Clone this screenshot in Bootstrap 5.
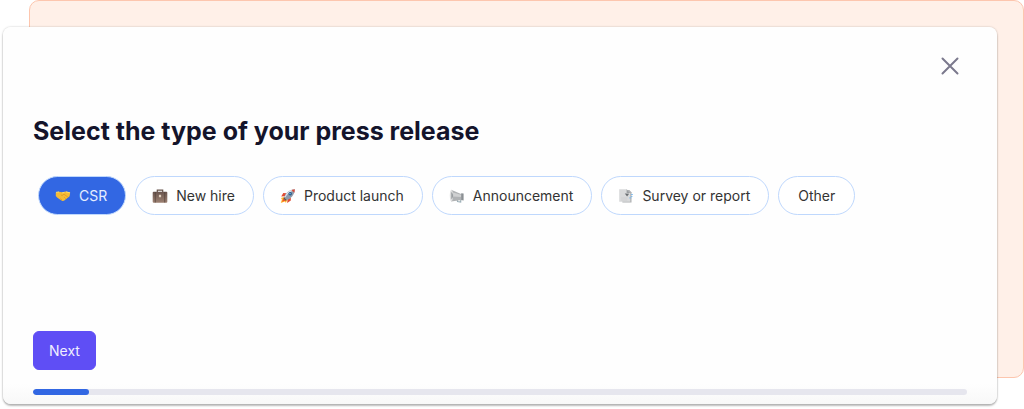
<!DOCTYPE html>
<html lang="en">
<head>
<meta charset="utf-8">
<meta name="viewport" content="width=device-width, initial-scale=1">
<title>Press release type</title>
<link href="https://cdn.jsdelivr.net/npm/bootstrap@5.3.0/dist/css/bootstrap.min.css" rel="stylesheet">
<style>
  body { font-family: Inter, "Liberation Sans", sans-serif; font-size: 14px; line-height: 19px; color: #333; background: #fff; }
  /* The backdrop and the dialog share one grid cell */
  .stage > * { grid-area: 1 / 1; }
  .backdrop-panel { margin: 0 0 31px 29px; background: #fff0e8; border: 1px solid #fdc6ae; border-radius: 10px; }
  .dialog-panel { margin: 27px 27px 5px 3px; padding: 26px 30px 9px; border-radius: 8px;
    background: linear-gradient(to bottom, #fefefe calc(100% - 20px), #f8f8f8);
    box-shadow: 0 0 2px rgba(0,0,0,.25), 0 2px 2px rgba(0,0,0,.25); }
  .close-button { width: 26px; height: 26px; margin-right: 4px; color: #7b798d; line-height: 0; }
  .dialog-title { margin: 35px 0 27px; font-size: 25px; line-height: 35px; font-weight: 700; color: #14142b; }
  .choices { gap: 9px; padding-left: 5px; }
  .choice, .next-button { --bs-btn-font-size: 14px; --bs-btn-line-height: 19px; --bs-btn-padding-y: 9px; }
  .choice { --bs-btn-border-radius: 20px;
    --bs-btn-color: #333; --bs-btn-bg: #fff; --bs-btn-border-color: #bfd8fd;
    --bs-btn-hover-color: #333; --bs-btn-hover-bg: #f3f8ff; --bs-btn-hover-border-color: #bfd8fd;
    --bs-btn-active-color: #e4edff; --bs-btn-active-bg: #3267e3; --bs-btn-active-border-color: #bfd8fd;
    gap: 8px; padding-left: 16px; padding-right: 18px; }
  .choice-plain { padding-left: 19px; padding-right: 19px; }
  .next-button { --bs-btn-padding-x: 15px;
    --bs-btn-border-radius: 6px; --bs-btn-color: #f0eeff; --bs-btn-bg: #5f4ef5; --bs-btn-border-color: #5f4ef5;
    --bs-btn-hover-color: #fff; --bs-btn-hover-bg: #503fe0; --bs-btn-hover-border-color: #503fe0; margin: 116px 0 19px; }
  .steps { --bs-progress-height: 6px; --bs-progress-bg: #e6e6ee; --bs-progress-bar-bg: #3267e3; --bs-progress-border-radius: 3px; }
  .steps .progress-bar { border-radius: 3px; }
</style>
</head>
<body>
<div class="stage d-grid">
  <div class="backdrop-panel"></div>
  <main class="dialog-panel">
    <div class="d-flex justify-content-end">
      <button type="button" class="close-button btn p-0 border-0" aria-label="Close">
        <svg width="26" height="26" viewBox="0 0 26 26" fill="none" stroke="currentColor" stroke-width="2" stroke-linecap="round"><path d="M5.5 5.5l15 15M20.5 5.5l-15 15"/></svg>
      </button>
    </div>
    <form>
      <h1 class="dialog-title">Select the type of your press release</h1>
      <div class="choices d-flex flex-wrap" role="radiogroup" aria-label="Press release type">
        <div>
          <input class="btn-check" type="radio" name="kind" id="csr" checked>
          <label class="choice btn d-flex align-items-center" for="csr">
            <svg width="16" height="16" viewBox="0 0 16 16" aria-hidden="true"><path d="M.8 4.4l3.3-.7 3 .6 3.8-.7 4.3 1-.6 3.7-2.2 1.6-3.4 2.8-1.6.3-2.1-1.2-3.2-2.4L.8 8z" fill="#f4bb36"/><path d="M5.8 6.7l1.2.8 2-1.3 4.2 3.1M7 11.9l-1.8-1.2M10.7 10.7L9.2 9.2" fill="none" stroke="#d78d1c" stroke-width=".6"/><path d="M1 4.4l3-.5M11 3.9l4 .9M7.2 4.8l2.2-.4" stroke="#ffe06c" stroke-width=".9"/></svg>
            <span>CSR</span></label>
        </div>
        <div>
          <input class="btn-check" type="radio" name="kind" id="hire">
          <label class="choice btn d-flex align-items-center" for="hire">
            <svg width="16" height="16" viewBox="0 0 16 16" aria-hidden="true"><defs><linearGradient id="leather" x2="0" y2="1"><stop stop-color="#69554e"/><stop offset="1" stop-color="#9d8172"/></linearGradient></defs><path d="M5.3 4V2.1h5.4V4" fill="none" stroke="#66534a" stroke-width="1.2"/><rect x=".7" y="3.7" width="14.6" height="11" rx="1" fill="url(#leather)"/><path d="M3.3 4v10.5M12.7 4v10.5" stroke="#514039" stroke-width=".7"/><rect x="6.9" y="6.7" width="2.2" height="2.6" rx=".4" fill="#e0cfbd"/></svg>
            <span>New hire</span></label>
        </div>
        <div>
          <input class="btn-check" type="radio" name="kind" id="launch">
          <label class="choice btn d-flex align-items-center" for="launch">
            <svg width="16" height="16" viewBox="0 0 16 16" aria-hidden="true"><path d="M4.7 8.7L1 10l.9 1.4L.8 14.9l3.9-1.4 1.2 1.2 1.6-3.3z" fill="#ffb52c"/><path d="M3.6 10.2L2 13.8l3.7-1.2z" fill="#f15128"/><path d="M6.5 5.2L3.3 5 1.2 8.5l3.6-.2zM10.8 9.4v3.1L7.2 15l.3-3.8z" fill="#df4c35"/><path d="M4.1 9.5c1.3-4 4.5-7.6 10.7-8.2-.2 5.7-3.9 9.5-8.1 10.8z" fill="#8e9bad"/><path d="M5 9.1c1.5-3.4 4.4-6.2 9-7.2" fill="none" stroke="#dce3ea" stroke-width="1.1"/><path d="M11.3 1.9l3.5-.6-.4 3.5z" fill="#dc4936"/><circle cx="10.2" cy="5.8" r="1.7" fill="#245582"/><circle cx="10" cy="5.6" r=".8" fill="#74b9e7"/><path d="M4.1 9.5l2.6 2.6-1 .6-2.2-2.2z" fill="#45556a"/></svg>
            <span>Product launch</span></label>
        </div>
        <div>
          <input class="btn-check" type="radio" name="kind" id="announcement">
          <label class="choice btn d-flex align-items-center" for="announcement">
            <svg width="16" height="16" viewBox="0 0 16 16" aria-hidden="true"><path d="M8 10.5l.5 3.1 3.2.5.1-2.4" fill="none" stroke="#9aaeb6" stroke-width="1.1"/><path d="M2.1 1.7l10.6 4.5v5.7L2.1 13.5z" fill="#b0b2b4"/><path d="M3.2 4.3l9.5 2.8v2L3.2 8.6z" fill="#cfd0d1"/><path d="M12.2 5.3l2.4.2v7l-2.4-.5z" fill="#8b9094"/><ellipse cx="2.4" cy="7.6" rx="1.6" ry="5.9" fill="#dedede"/><path d="M2.2 3.9c2.4 1.5 2.7 5.2.1 7.4" fill="#999da0"/></svg>
            <span>Announcement</span></label>
        </div>
        <div>
          <input class="btn-check" type="radio" name="kind" id="survey">
          <label class="choice btn d-flex align-items-center" for="survey">
            <svg width="16" height="16" viewBox="0 0 16 16" aria-hidden="true"><path d="M3.3 2.1h8l2.2 2.2v10.3H4.4z" fill="#adafb1"/><path d="M1.2 1.2h7.4l3.7 3.6v9H1.2z" fill="#d9dadb"/><path d="M8.6 1.2v3.7h3.7z" fill="#9c9fa2"/><path d="M6.8 5.5l4.3.3-2 2.6z" fill="#686c70"/><path d="M3.2 10h6M3.2 12h6" stroke="#cbccce" stroke-width=".8"/><path d="M13.1 6.5h1.7M13.1 8.5h1.3M11.3 9.9h2" stroke="#76b6ed" stroke-width="1"/></svg>
            <span>Survey or report</span></label>
        </div>
        <div>
          <input class="btn-check" type="radio" name="kind" id="other">
          <label class="choice choice-plain btn d-flex align-items-center" for="other"><span>Other</span></label>
        </div>
      </div>
      <button type="button" class="next-button btn">Next</button>
    </form>
    <div class="steps progress" role="progressbar" aria-label="Progress" aria-valuenow="6" aria-valuemin="0" aria-valuemax="100">
      <div class="progress-bar" style="width: 6%"></div>
    </div>
  </main>
</div>
<script src="https://cdn.jsdelivr.net/npm/bootstrap@5.3.0/dist/js/bootstrap.bundle.min.js"></script>
</body>
</html>
